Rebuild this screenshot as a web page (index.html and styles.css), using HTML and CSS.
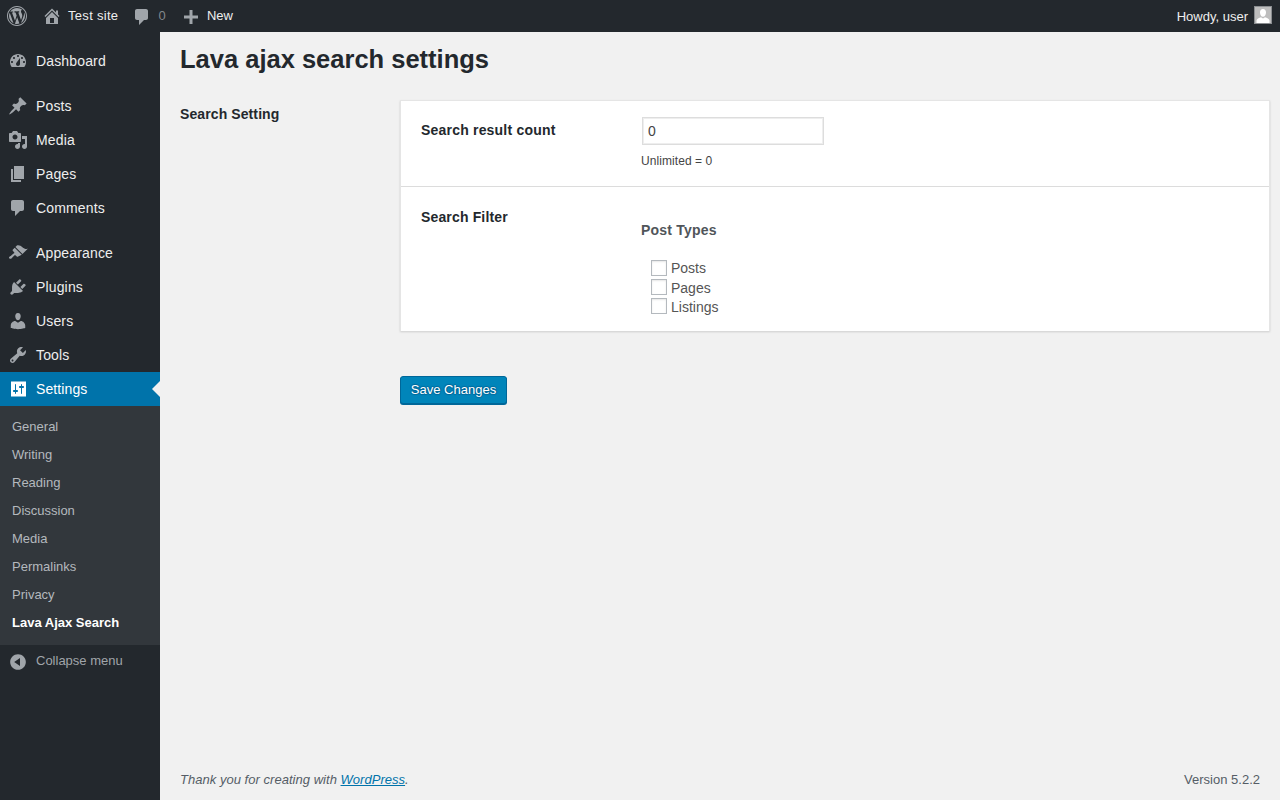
FILE: index.html
```html
<!DOCTYPE html>
<html>

<head>
    <meta charset="UTF-8">
    <title>Lava ajax search settings</title>
    <link rel="stylesheet" href="styles.css">
</head>

<body>
    <div id="adminbar">
        <div class="bar-left">
            <a class="bar-logo"><svg class="bar-icon" viewBox="0 0 20 20"><path d="M20 10c0-5.52-4.48-10-10-10S0 4.48 0 10s4.48 10 10 10 10-4.48 10-10zM10 1.01c4.96 0 8.99 4.03 8.99 8.99s-4.03 8.99-8.99 8.99S1.01 14.96 1.01 10 5.04 1.01 10 1.01zM8.01 14.82L4.96 6.61c.49-.03 1.05-.08 1.05-.08.43-.05.38-1.01-.06-.99 0 0-1.29.1-2.13.1-.15 0-.33 0-.52-.01 1.44-2.17 3.9-3.6 6.7-3.6 2.09 0 3.99.79 5.41 2.09-.6-.08-1.45.35-1.45 1.42 0 .66.38 1.22.79 1.88.31.54.5 1.22.5 2.21 0 1.34-1.27 4.48-1.27 4.48l-2.71-7.5c.48-.03.75-.16.75-.16.43-.05.38-1.1-.05-1.08 0 0-1.3.11-2.14.11-.78 0-2.11-.11-2.11-.11-.43-.02-.48 1.06-.05 1.08l.84.08 1.12 3.04zm6.02 2.15L16.64 10s.67-1.69.39-3.81c.63 1.14.94 2.42.94 3.81 0 2.96-1.56 5.58-3.94 6.97zM2.68 6.77L6.5 17.25c-2.67-1.3-4.47-4.08-4.47-7.25 0-1.16.2-2.23.65-3.23zm7.45 4.53l2.29 6.25c-.75.27-1.57.42-2.42.42-.72 0-1.41-.11-2.06-.3z"/></svg></a>
            <a class="bar-item bar-site"><svg class="bar-icon" viewBox="0 0 20 20"><path fill-rule="evenodd" d="M16 8.5l1.53 1.53-1.06 1.06L10 4.62l-6.47 6.47-1.06-1.06L10 2.5l4 4v-2h2v4zm-6-2.46l6 5.99V18H4v-5.97zM12 17v-5H8v5h4z"/></svg>Test site</a>
            <a class="bar-item bar-comments"><svg class="bar-icon" viewBox="0 0 20 20"><path d="M5 2h9c1.1 0 2 .9 2 2v7c0 1.1-.9 2-2 2h-2l-5 5v-5H5c-1.1 0-2-.9-2-2V4c0-1.1.9-2 2-2z"/></svg>0</a>
            <a class="bar-item bar-new"><svg class="bar-icon" viewBox="0 0 20 20"><path d="M17 8.500v3h-5.500V17h-3v-5.500H3v-3h5.500V3h3v5.500H17z"/></svg>New</a>
        </div>
        <a class="bar-user">Howdy, user<span class="avatar"><svg viewBox="0 0 16 16"><path d="M8 2c1.900 0 3 1.500 3 3.400S9.800 9.800 8 9.800 5 7.300 5 5.400 6.100 2 8 2zM1.500 16v-2.500c0-1.600 2.600-2.900 4.500-3.300L8 11.500l2-1.300c1.900.4 4.500 1.700 4.500 3.300V16z"/></svg></span></a>
    </div>

    <div id="wrap">
        <div id="sidebar">
            <ul class="menu">
                <li class="menu-item"><svg class="menu-icon" viewBox="0 0 20 20"><path fill-rule="evenodd" d="M3.76 16h12.48c1.1-1.370 1.760-3.110 1.760-5 0-4.420-3.580-8-8-8s-8 3.580-8 8c0 1.890.66 3.630 1.760 5zM10 4c.55 0 1 .45 1 1s-.45 1-1 1-1-.45-1-1 .45-1 1-1zM6 6c.55 0 1 .45 1 1s-.45 1-1 1-1-.45-1-1 .45-1 1-1zm8 0c.55 0 1 .45 1 1s-.45 1-1 1-1-.45-1-1 .45-1 1-1zm-5.370 5.550L12 7v6c0 1.100-.9 2-2 2s-2-.9-2-2c0-.57.24-1.080.63-1.450zM4 10c.55 0 1 .45 1 1s-.45 1-1 1-1-.45-1-1 .45-1 1-1zm12 0c.55 0 1 .45 1 1s-.45 1-1 1-1-.45-1-1 .45-1 1-1z"/></svg>Dashboard</li>
                <li class="menu-sep"></li>
                <li class="menu-item"><svg class="menu-icon" viewBox="0 0 20 20"><path d="M10.440 3.020l1.820-1.820 6.360 6.350-1.830 1.820c-1.050-.68-2.480-.57-3.410.36l-.75.75c-.92.93-1.040 2.350-.35 3.410l-1.830 1.820-2.410-2.410-2.800 2.790c-.42.42-3.380 2.710-3.800 2.290s1.860-3.390 2.280-3.810l2.790-2.790L4.100 9.360l1.830-1.820c1.050.69 2.480.57 3.400-.36l.75-.75c.93-.92 1.050-2.350.36-3.410z"/></svg>Posts</li>
                <li class="menu-item"><svg class="menu-icon" viewBox="0 0 20 20"><path fill-rule="evenodd" d="M13 11V4c0-.55-.45-1-1-1h-1.670L9 1H5L3.670 3H2c-.55 0-1 .45-1 1v7c0 .55.45 1 1 1h10c.55 0 1-.45 1-1zM7 4.500c1.380 0 2.500 1.120 2.500 2.500S8.380 9.500 7 9.500 4.500 8.380 4.500 7 5.620 4.500 7 4.500zM14 6h5v10.500c0 1.380-1.120 2.500-2.500 2.500S14 17.880 14 16.500s1.120-2.500 2.500-2.500c.17 0 .34.02.5.05V9h-3V6zm-4 8.050V13h2v3.500c0 1.380-1.120 2.500-2.500 2.500S7 17.880 7 16.500 8.120 14 9.500 14c.17 0 .34.02.5.05z"/></svg>Media</li>
                <li class="menu-item"><svg class="menu-icon" viewBox="0 0 20 20"><path d="M6 15V2h10v13H6zm-1 1h8v2H3V5h2v11z"/></svg>Pages</li>
                <li class="menu-item"><svg class="menu-icon" viewBox="0 0 20 20"><path d="M5 2h9c1.100 0 2 .9 2 2v7c0 1.100-.9 2-2 2h-2l-5 5v-5H5c-1.100 0-2-.9-2-2V4c0-1.100.9-2 2-2z"/></svg>Comments</li>
                <li class="menu-sep"></li>
                <li class="menu-item"><svg class="menu-icon" viewBox="0 0 20 20"><path d="M14.480 11.060L7.410 3.990l1.500-1.500c.5-.56 2.300-.47 3.510.32 1.210.8 1.430 1.280 2.910 2.100 1.180.64 2.450 1.260 4.450.85zm-.71.71L6.700 4.700 4.930 6.470c-.39.39-.39 1.020 0 1.410l1.060 1.060c.39.39.39 1.030 0 1.420-.6.6-1.430 1.110-2.210 1.690-.35.26-.7.53-1.010.84C1.430 13.230.4 14.370 1.440 15.410c.56.56 1.520.41 2.020.01.3-.31.6-.65.9-1 .63-.72 1.320-1.400 1.920-2 .39-.39 1.030-.39 1.420 0l1.060 1.060c.39.39 1.020.39 1.410 0z"/></svg>Appearance</li>
                <li class="menu-item"><svg class="menu-icon" viewBox="0 0 20 20"><path d="M13.110 4.360L9.870 7.600 8 5.730l3.240-3.240c.35-.34 1.050-.2 1.560.32.52.51.66 1.210.31 1.550zm-8 1.770l.91-1.120 9.010 9.010-1.190.84c-.71.71-2.630 1.160-3.820 1.160H6.140L4.900 17.260c-.59.59-1.540.59-2.120 0-.59-.58-.59-1.530 0-2.120l1.240-1.240v-3.880c0-1.130.4-3.190 1.090-3.890zm7.260 3.970l3.240-3.240c.34-.35 1.040-.21 1.550.31.52.51.66 1.210.31 1.550l-3.240 3.250z"/></svg>Plugins</li>
                <li class="menu-item"><svg class="menu-icon" viewBox="0 0 20 20"><path d="M10 9.250c-2.270 0-2.730-3.440-2.730-3.440C7 4.020 7.820 2 9.970 2c2.160 0 2.980 2.020 2.710 3.810 0 0-.41 3.440-2.680 3.440zm0 2.570L12.720 10c2.390 0 4.520 2.330 4.520 4.530v2.490s-3.650 1.130-7.240 1.130c-3.650 0-7.240-1.130-7.240-1.130v-2.490c0-2.250 1.940-4.480 4.470-4.480z"/></svg>Users</li>
                <li class="menu-item"><svg class="menu-icon" viewBox="0 0 20 20"><path fill-rule="evenodd" d="M16.680 9.770c-1.340 1.340-3.300 1.670-4.950.99l-5.410 6.520c-.99.99-2.590.99-3.580 0s-.99-2.590 0-3.570l6.520-5.420c-.68-1.650-.35-3.610.99-4.950 1.280-1.280 3.120-1.620 4.720-1.060l-2.890 2.890 2.820 2.820 2.860-2.870c.53 1.580.18 3.390-1.080 4.650zM3.810 16.210c.4.39 1.040.39 1.430 0 .4-.4.4-1.040 0-1.430-.39-.4-1.030-.4-1.430 0-.39.39-.39 1.030 0 1.430z"/></svg>Tools</li>
                <li class="menu-item current"><svg class="menu-icon" viewBox="0 0 20 20"><path fill-rule="evenodd" d="M3 2.500h15v15H3zM8 11h1c.55 0 1 .45 1 1s-.45 1-1 1H8v1.500c0 .28-.22.5-.5.5s-.5-.22-.5-.5V13H6c-.55 0-1-.45-1-1s.45-1 1-1h1V5.500c0-.28.22-.5.5-.5s.5.22.5.5V11zm5-2h-1c-.55 0-1-.45-1-1s.45-1 1-1h1V5.500c0-.28.22-.5.5-.5s.5.22.5.5V7h1c.55 0 1 .45 1 1s-.45 1-1 1h-1v5.500c0 .28-.22.5-.5.5s-.5-.22-.5-.5V9z"/></svg>Settings</li>
                <li class="submenu">
                    <ul>
                        <li>General</li>
                        <li>Writing</li>
                        <li>Reading</li>
                        <li>Discussion</li>
                        <li>Media</li>
                        <li>Permalinks</li>
                        <li>Privacy</li>
                        <li class="sub-current">Lava Ajax Search</li>
                    </ul>
                </li>
                <li class="collapse"><svg class="menu-icon" viewBox="0 0 20 20"><path fill-rule="evenodd" d="M10 2.160c4.330 0 7.840 3.510 7.840 7.840s-3.510 7.840-7.840 7.840S2.160 14.330 2.160 10 5.710 2.160 10 2.160zm2 11.720V6.120L6.180 9.970z"/></svg>Collapse menu</li>
            </ul>
        </div>

        <div id="content">
            <h1>Lava ajax search settings</h1>
            <div class="section">
                <h2 class="section-title">Search Setting</h2>
                <div class="section-body">
                    <div class="card">
                        <div class="row row-count">
                            <div class="row-label">Search result count</div>
                            <div class="row-field">
                                <input class="text-input" type="text" value="0">
                                <p class="hint">Unlimited = 0</p>
                            </div>
                        </div>
                        <div class="row row-filter">
                            <div class="row-label">Search Filter</div>
                            <div class="row-field">
                                <h4 class="field-title">Post Types</h4>
                                <ul class="checks">
                                    <li><span class="check"></span>Posts</li>
                                    <li><span class="check"></span>Pages</li>
                                    <li><span class="check"></span>Listings</li>
                                </ul>
                            </div>
                        </div>
                    </div>
                    <button class="save" type="button">Save Changes</button>
                </div>
            </div>
            <div class="footer">
                <span class="thanks">Thank you for creating with <a>WordPress</a>.</span>
                <span>Version 5.2.2</span>
            </div>
        </div>
    </div>
</body>

</html>
```

FILE: styles.css
```css
* {
    margin: 0;
    padding: 0;
    box-sizing: border-box;
}

html,
body {
    height: 800px;
    overflow: hidden;
}

body {
    display: flex;
    flex-direction: column;
    background: #f1f1f1;
    color: #444;
    font-family: "Liberation Sans", Arial, sans-serif;
    font-size: 13px;
}

ul {
    list-style: none;
}

/* top bar */
#adminbar {
    height: 32px;
    flex: none;
    display: flex;
    justify-content: space-between;
    background: #23282d;
    color: #eee;
}

.bar-left {
    display: flex;
}

.bar-logo {
    width: 34px;
    padding-left: 7px;
    display: flex;
    align-items: center;
}

.bar-item {
    display: flex;
    align-items: center;
    padding: 0 7px 0 8px;
    line-height: 32px;
}

.bar-site {
    letter-spacing: .3px;
    padding-right: 6px;
}

.bar-icon {
    width: 20px;
    height: 20px;
    fill: #a0a5aa;
    margin-right: 6px;
    flex: none;
}

.bar-logo .bar-icon {
    margin-right: 0;
}

.bar-comments {
    color: #82878c;
    letter-spacing: .3px;
}

.bar-comments .bar-icon {
    margin-top: 2px;
}

.bar-new .bar-icon {
    margin-top: 1px;
}

.bar-user {
    display: flex;
    align-items: center;
    padding-right: 8px;
}

.avatar {
    width: 18px;
    height: 18px;
    margin: -2px 0 0 6px;
    background: #bdbdbd;
    border: 1px solid #8a8d90;
    display: block;
}

.avatar svg {
    display: block;
    width: 100%;
    height: 100%;
    fill: #fff;
}

/* left menu */
#wrap {
    flex: 1;
    display: flex;
    min-height: 0;
}

#sidebar {
    width: 160px;
    flex: none;
    background: #23282d;
    padding-top: 12px;
}

.menu-item {
    height: 34px;
    display: flex;
    align-items: center;
    padding-left: 8px;
    color: #eee;
    font-size: 14px;
    letter-spacing: .15px;
    position: relative;
}

.menu-icon {
    width: 20px;
    height: 20px;
    fill: #a0a5aa;
    margin-right: 8px;
    flex: none;
}

.menu-sep {
    height: 11px;
}

.current {
    background: #0073aa;
    color: #fff;
    letter-spacing: .1px;
}

.current .menu-icon {
    fill: #fff;
}

.current::after {
    content: "";
    position: absolute;
    right: 0;
    top: 50%;
    margin-top: -8px;
    border: 8px solid transparent;
    border-right-color: #f1f1f1;
    border-left-width: 0;
}

.submenu {
    background: #32373c;
    padding: 7px 0 8px;
    color: #b4b9be;
}

.submenu li {
    height: 28px;
    line-height: 27px;
    padding-left: 12px;
}

.submenu .sub-current {
    color: #fff;
    font-weight: bold;
}

.collapse {
    display: flex;
    align-items: center;
    height: 32px;
    padding: 0 0 2px 8px;
    color: #a0a5aa;
}

.collapse .menu-icon {
    margin-top: 4px;
}

/* main area */
#content {
    flex: 1;
    min-width: 0;
    display: flex;
    flex-direction: column;
    padding: 0 20px;
    color: #23282d;
}

h1 {
    font-size: 25.5px;
    line-height: 32px;
    margin-top: 11px;
    color: #23282d;
}

.section {
    display: flex;
    margin-top: 25px;
    margin-right: -10px;
}

.section-title {
    width: 220px;
    flex: none;
    font-size: 14px;
    line-height: 18px;
    margin-top: 5px;
    letter-spacing: .1px;
}

.section-body {
    flex: 1;
}

.card {
    background: #fff;
    box-shadow: 0 1px 2px rgba(0, 0, 0, .15);
    border: 1px solid #e5e5e5;
    border-width: 1px 1px 0;
}

.row {
    display: flex;
    padding-left: 20px;
}

.row-count {
    height: 86px;
    border-bottom: 1px solid #dcdcdc;
    padding-top: 16px;
}

.row-filter {
    height: 144px;
    padding-top: 21px;
}

.row-label {
    width: 220px;
    flex: none;
    font-size: 14px;
    font-weight: bold;
    line-height: 18px;
    letter-spacing: .2px;
}

.row-count .row-label {
    margin-top: 4px;
}

.row-filter .row-label {
    letter-spacing: .15px;
}

.text-input {
    display: block;
    width: 182px;
    height: 28px;
    margin-left: 1px;
    padding: 0 5px;
    border: 1px solid #ddd;
    box-shadow: inset 0 0 0 1px #eee;
    background: #fff;
    color: #444;
    font: 14px "Liberation Sans", Arial, sans-serif;
    outline: none;
}

.hint {
    margin-top: 9px;
    font-size: 12px;
    line-height: 14px;
    letter-spacing: .07px;
    color: #444;
}

.field-title {
    margin-top: 13px;
    font-size: 14px;
    line-height: 18px;
    letter-spacing: .2px;
    color: #50555a;
}

.checks {
    margin-top: 19.5px;
    padding-left: 10px;
    font-size: 14px;
    color: #555;
}

.checks li {
    display: flex;
    align-items: center;
    height: 19.4px;
}

.check {
    width: 16px;
    height: 16px;
    margin: -1px 4px 0 0;
    background: #fff;
    border: 1px solid #b4b9be;
    box-shadow: inset 0 1px 2px rgba(0, 0, 0, .1);
}

.save {
    display: block;
    width: 107px;
    height: 28px;
    margin-top: 44.5px;
    background: #0085ba;
    border: 1px solid #006799;
    border-radius: 3px;
    box-shadow: 0 1px 0 #006799;
    color: #fff;
    font: 13px "Liberation Sans", Arial, sans-serif;
    text-shadow: 0 -1px 1px #006799, 1px 0 1px #006799, 0 1px 1px #006799, -1px 0 1px #006799;
}

.footer {
    margin-top: auto;
    height: 42px;
    display: flex;
    justify-content: space-between;
    line-height: 43px;
    color: #555d66;
}

.thanks {
    font-style: italic;
    letter-spacing: .03px;
}

.thanks a {
    color: #0073aa;
    text-decoration: underline;
}
```
